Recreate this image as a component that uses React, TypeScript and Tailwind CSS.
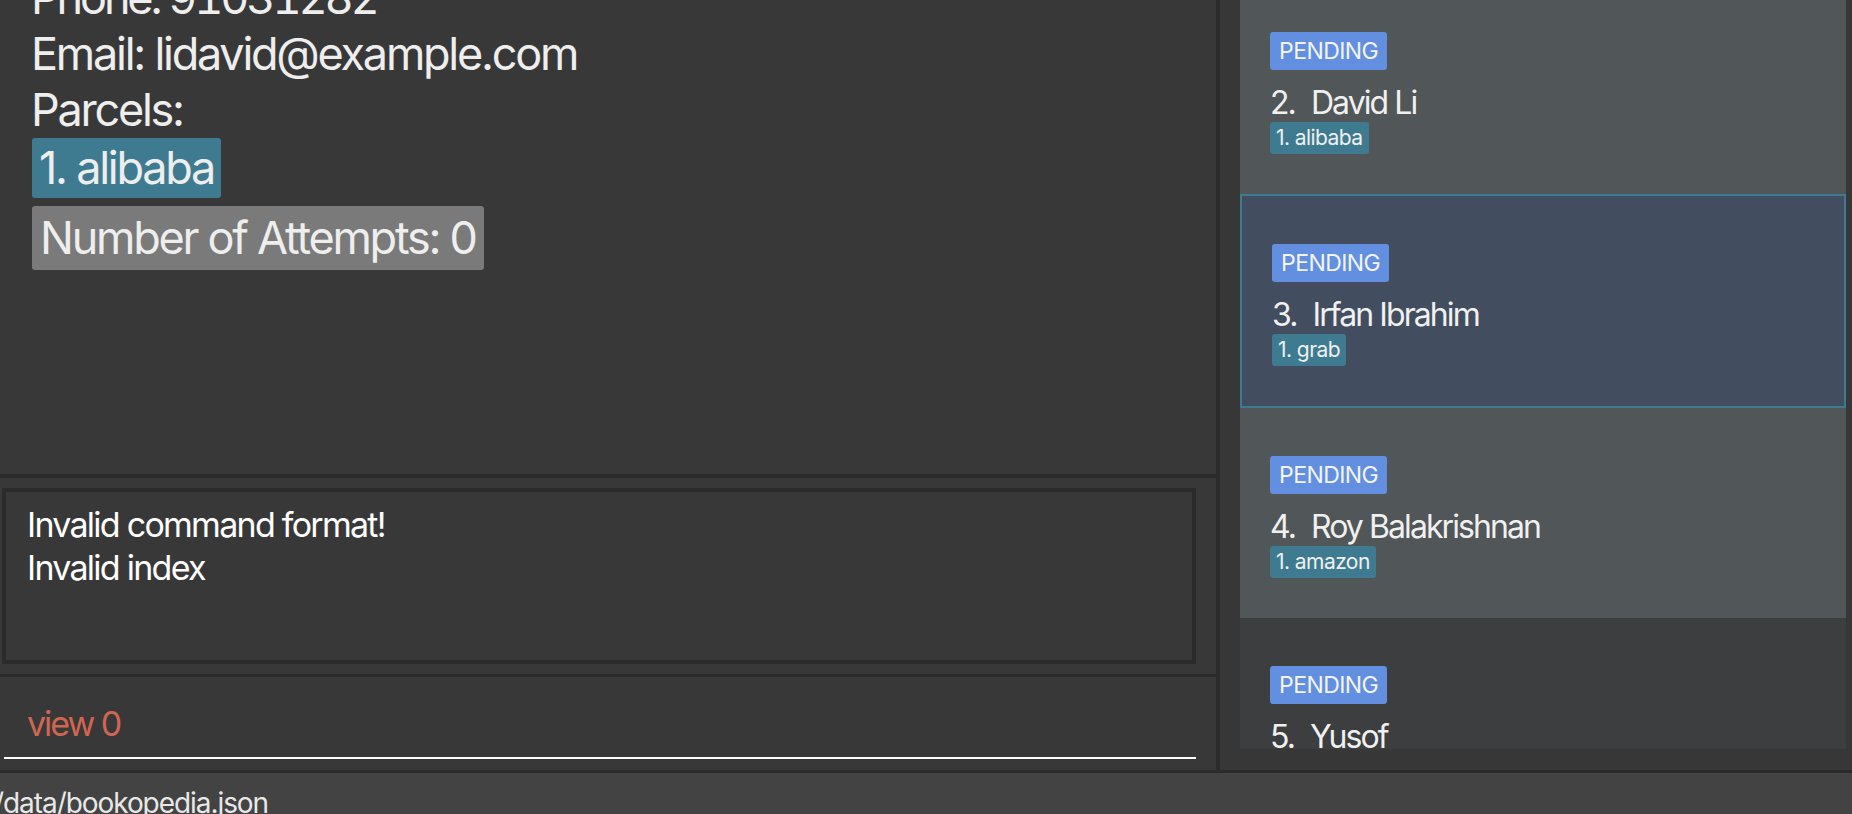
import React from 'react'

type Parcel = { id: number; name: string; status: string }
type Person = { index: number; name: string; parcels: Parcel[] }

const people: Person[] = [
  { index: 2, name: 'David Li', parcels: [{ id: 1, name: 'alibaba', status: 'PENDING' }] },
  { index: 3, name: 'Irfan Ibrahim', parcels: [{ id: 1, name: 'grab', status: 'PENDING' }] },
  { index: 4, name: 'Roy Balakrishnan', parcels: [{ id: 1, name: 'amazon', status: 'PENDING' }] },
  { index: 5, name: 'Yusof', parcels: [{ id: 1, name: 'shopee', status: 'PENDING' }] },
]

const SELECTED = 3

const PersonCard: React.FC<{ person: Person }> = ({ person }) => {
  const selected = person.index === SELECTED
  const base = selected
    ? 'h-[214px] border-2 border-[#3e7b91] bg-[#424d5f]'
    : person.index % 2 === 0
      ? 'h-[210px] bg-[#515658]'
      : 'h-[210px] bg-[#3c3e3f]'
  return (
    <div className={`${base} flex flex-col items-start pl-[30px] pt-[48px]`}>
      <div className="h-[38px] rounded-[3px] bg-[#628fe0] px-[9px] text-[23px] leading-[38px] text-[#f4f4f4]">
        {person.parcels[0].status}
      </div>
      <div className="mt-[13px] flex gap-[16px] text-[32px] leading-[39px] tracking-[-0.06em] text-[#f0f0f0]">
        <span>{person.index}.</span>
        <span>{person.name}</span>
      </div>
      <div className="flex gap-2">
        {person.parcels.map((p) => (
          <div
            key={p.id}
            className="h-[32px] rounded-[3px] bg-[#3e7b91] px-[6px] text-[21px] leading-[32px] text-[#f0f0f0]"
          >
            {p.id}. {p.name}
          </div>
        ))}
      </div>
    </div>
  )
}

export default function App() {
  return (
    <div className="flex h-[814px] w-[1852px] flex-col overflow-hidden bg-[#383838] font-['Inter','Noto_Sans',sans-serif] tracking-[-0.035em]">
      <div className="flex h-[770px]">
        {/* left side: details, result, command */}
        <div className="flex w-[1216px] flex-col">
          <div className="h-[474px] overflow-hidden pl-[31px] text-[45px] leading-[56px] tracking-[-0.05em] text-[#eeeeee]">
            <div className="-mt-[30px]">
              <div className="tabular-nums tracking-[-0.07em]">Phone: 91031282</div>
              <div>Email: lidavid@example.com</div>
              <div>Parcels:</div>
              <div className="flex flex-col items-start gap-[8px] pl-[1px]">
                <div className="rounded-[3px] bg-[#3e7b91] px-[7px] py-[2px]">1. alibaba</div>
                <div className="rounded-[3px] bg-[#7a7a7a] px-[8px] py-[4px]">Number of Attempts: 0</div>
              </div>
            </div>
          </div>
          <div className="h-[4px] bg-[#2b2b2b]" />
          <div className="px-[2px] py-[10px]">
            <div className="h-[176px] w-[1194px] border-4 border-[#2b2b2b] pl-[21px] pt-[11px] text-[34px] leading-[43px] tracking-[-0.051em] text-white">
              <div>Invalid command format!</div>
              <div>Invalid index</div>
            </div>
          </div>
          <div className="h-[3px] bg-[#2b2b2b]" />
          <div className="flex-1 pl-[4px] pr-[20px] pt-[25px]">
            <div className="border-b-2 border-white pb-[12px] pl-[23px] text-[34px] leading-[43px] tracking-[-0.06em] text-[#d06651]">
              view 0
            </div>
          </div>
        </div>
        <div className="w-[4px] bg-[#2b2b2b]" />
        {/* right side: person list */}
        <div className="flex-1 bg-[#373737] pb-[21px] pl-[20px] pr-[6px]">
          <div className="h-full overflow-hidden">
            <div className="-mt-[16px]">
              {people.map((p) => (
                <PersonCard key={p.index} person={p} />
              ))}
            </div>
          </div>
        </div>
      </div>
      <div className="h-[3px] bg-[#2b2b2b]" />
      <div className="flex-1 overflow-hidden bg-[#434343] pt-[13px] text-[28px] leading-[34px] tracking-[-0.038em] text-[#e8e8e8]">
        <div className="-ml-[6px] whitespace-nowrap">/data/bookopedia.json</div>
      </div>
    </div>
  )
}
